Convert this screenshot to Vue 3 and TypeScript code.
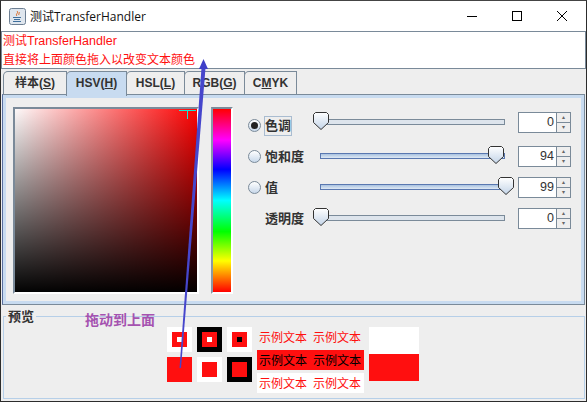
<template>
  <div class="window">
    <div class="titlebar">
      <svg class="app-icon" width="17" height="17" viewBox="0 0 17 17">
        <rect x="0.5" y="0.5" width="16" height="16" rx="2" fill="#dfe6ee" stroke="#6d7f93" />
        <path d="M8 3c2 2-2 3 0 5M10 4c1 1-1 2 0 3" fill="none" stroke="#d9651c" stroke-width="1" />
        <path d="M4 9.5h8M5 11.5h6M4 13.5h8" stroke="#3f6f9c" stroke-width="1" />
      </svg>
      <span class="title">测试TransferHandler</span>
      <div class="win-buttons">
        <svg width="12" height="12" viewBox="0 0 12 12"><path d="M1 6.5h10" stroke="#000" /></svg>
        <svg width="12" height="12" viewBox="0 0 12 12"><rect x="1.5" y="1.5" width="9" height="9" fill="none" stroke="#000" /></svg>
        <svg width="12" height="12" viewBox="0 0 12 12"><path d="M1 1l10 10M11 1L1 11" stroke="#000" /></svg>
      </div>
    </div>

    <div class="text-pane">
      <div>测试<span class="latin">TransferHandler</span></div>
      <div>直接将上面颜色拖入以改变文本颜色</div>
    </div>

    <div class="tabs">
      <div
        v-for="tab in tabs"
        :key="tab.label"
        class="tab"
        :class="{ active: tab.label === 'HSV' }"
        :style="{ width: tab.width + 'px' }"
      >
        {{ tab.label }}<template v-if="tab.key">(<u>{{ tab.key }}</u>)</template><template v-else>C<u>M</u>YK</template>
      </div>
    </div>

    <div class="pane">
      <div class="picker">
        <div class="sv-box">
          <svg class="sv-cursor" width="17" height="9" viewBox="0 0 17 9">
            <path d="M0 .5h17M8.5 0v9" stroke="#19e6d2" fill="none" />
          </svg>
        </div>
        <div class="hue-strip"></div>
      </div>
      <div class="controls">
        <div v-for="row in rows" :key="row.label" class="row" :class="{ first: row.checked }">
          <span class="radio" :class="{ checked: row.checked, hidden: row.noRadio }"></span>
          <span class="label" :class="{ focused: row.checked }">{{ row.label }}</span>
          <div class="slider">
            <div class="track" :class="{ filled: row.filled }"></div>
            <svg class="thumb" :style="{ left: row.thumb + 'px' }" width="16" height="18" viewBox="0 0 16 18">
              <defs>
                <linearGradient :id="'th' + row.thumb" x1="0" y1="0" x2="0" y2="1">
                  <stop offset="0" stop-color="#ffffff" />
                  <stop offset="1" stop-color="#c3d4e8" />
                </linearGradient>
              </defs>
              <path d="M2.5 .5h11l2 2v8l-7.5 7-7.5-7v-8z" :fill="'url(#th' + row.thumb + ')'" stroke="#333" />
            </svg>
          </div>
          <div class="spinner">
            <div class="spin-value">{{ row.value }}</div>
            <div class="spin-buttons">
              <div class="spin-btn">▴</div>
              <div class="spin-btn">▾</div>
            </div>
          </div>
        </div>
      </div>
    </div>

    <fieldset class="preview">
      <legend>预览</legend>
      <div class="preview-body">
        <div class="swatches">
          <div v-for="(s, i) in swatches" :key="i" class="swatch" :style="{ background: s[0] }">
            <div class="swatch-mid">
              <div class="swatch-dot" :style="{ background: s[1] }"></div>
            </div>
          </div>
        </div>
        <div class="samples">
          <div class="sample plain"><span>示例文本</span><span>示例文本</span></div>
          <div class="sample inverted"><span>示例文本</span><span>示例文本</span></div>
          <div class="sample boxed"><span>示例文本</span><span>示例文本</span></div>
        </div>
        <div class="half-block">
          <div class="half-white"></div>
          <div class="half-red"></div>
        </div>
      </div>
    </fieldset>

    <span class="drag-note">拖动到上面</span>
    <svg class="arrow" width="587" height="402" viewBox="0 0 587 402">
      <polygon points="179.5,368 181,368 205.5,68 201.5,68" fill="#4646cc" />
      <polygon points="203.5,59 208,69 199,69" fill="#3f3fc8" />
    </svg>
  </div>
</template>

<script setup lang="ts">
interface Row {
  label: string
  value: number
  thumb: number
  checked?: boolean
  noRadio?: boolean
  filled?: boolean
}

const tabs = [
  { label: '样本', key: 'S', width: 64 },
  { label: 'HSV', key: 'H', width: 61 },
  { label: 'HSL', key: 'L', width: 59 },
  { label: 'RGB', key: 'G', width: 61 },
  { label: '', key: '', width: 53 }
]

const rows: Row[] = [
  { label: '色调', value: 0, thumb: 0, checked: true },
  { label: '饱和度', value: 94, thumb: 175, filled: true },
  { label: '值', value: 99, thumb: 185, filled: true },
  { label: '透明度', value: 0, thumb: 0, noRadio: true }
]

const red = '#ff0f0f'
// outer, dot
const swatches = [
  ['#fff', '#fff'],
  ['#000', '#fff'],
  ['#fff', '#000'],
  [red, red],
  ['#fff', red],
  ['#000', red]
]
</script>

<style>
body {
  margin: 0;
  background: #eeeeee;
}
</style>

<style scoped>
.window {
  position: relative;
  width: 587px;
  height: 402px;
  box-sizing: border-box;
  border: 1px solid #2c2c2c;
  border-top-color: #444;
  background: #eeeeee;
  display: flex;
  flex-direction: column;
  overflow: hidden;
  font-family: "Liberation Sans", "Noto Sans CJK SC", sans-serif;
  font-size: 12px;
  color: #333;
}

.titlebar {
  height: 30px;
  flex: none;
  background: #fff;
  display: flex;
  align-items: center;
  padding-left: 8px;
}
.app-icon {
  margin-right: 4px;
}
.title {
  font-family: "Open Sans", "Noto Sans CJK SC", sans-serif;
  font-size: 12px;
  color: #111;
}
.win-buttons {
  margin-left: auto;
  display: flex;
  gap: 33px;
  padding-right: 18px;
}
.win-buttons svg {
  display: block;
}

.text-pane {
  height: 38px;
  flex: none;
  box-sizing: border-box;
  border: 1px solid #7a8a99;
  background: #fff;
  color: #ff0f0f;
  font-size: 12px;
  line-height: 19px;
  padding: 0 0 0 1px;
}
.latin {
  font-size: 12.5px;
}

.tabs {
  height: 23px;
  flex: none;
  margin-top: 2px;
  padding-left: 2px;
  display: flex;
}
.tab {
  box-sizing: border-box;
  height: 23px;
  border: 1px solid #7a8a99;
  border-bottom: none;
  border-radius: 5px 0 0 0;
  margin-right: -1px;
  text-align: center;
  font-weight: 700;
  line-height: 22px;
  color: #333;
  background: #eeeeee;
}
.tab.active {
  position: relative;
  z-index: 1;
  height: 25px;
  background: #c8dbf0;
}

.pane {
  width: 583px;
  height: 211px;
  flex: none;
  margin-left: 1px;
  box-sizing: border-box;
  border: 1px solid #7a8a99;
  border-left-color: #5a70a0;
  box-shadow: inset 0 0 0 3px #c8dbf0;
  padding: 12px 0 0 10px;
  display: flex;
}
.picker {
  display: flex;
  gap: 12px;
}
.sv-box {
  position: relative;
  width: 186px;
  height: 187px;
  box-sizing: border-box;
  border: 2px solid #7a8a99;
  border-right-color: #fff;
  border-bottom-color: #fff;
  background: linear-gradient(to bottom, rgba(0, 0, 0, 0), #000), linear-gradient(to right, #fff, #ff0000);
  background-origin: border-box;
}
.sv-cursor {
  position: absolute;
  left: 164px;
  top: 1px;
}
.hue-strip {
  width: 22px;
  height: 187px;
  box-sizing: border-box;
  border: 2px solid #7a8a99;
  border-left-color: #8a99a8;
  border-right-color: #fff;
  border-bottom-color: #fff;
  background: linear-gradient(to bottom, #f00, #f0f 17%, #00f 33%, #0ff 50%, #0f0 67%, #ff0 83%, #f00);
}

.controls {
  margin-left: 15px;
  padding-top: 8px;
  display: flex;
  flex-direction: column;
  gap: 10px;
}
.row {
  display: flex;
  align-items: center;
  height: 21px;
}
/* java 里第一行的滑块和微调框比单选框高一点 */
.row.first .slider,
.row.first .spinner {
  margin-bottom: 6px;
}
.radio {
  flex: none;
  box-sizing: border-box;
  width: 13px;
  height: 13px;
  margin-right: 3px;
  border: 1px solid #7a8a99;
  border-radius: 50%;
  background: linear-gradient(#fff, #c8d8ea);
  position: relative;
}
.radio.checked::after {
  content: "";
  position: absolute;
  left: 2px;
  top: 2px;
  width: 7px;
  height: 7px;
  border-radius: 50%;
  background: #222;
}
.radio.hidden {
  visibility: hidden;
}
.label {
  flex: none;
  width: 49px;
  box-sizing: border-box;
  padding-left: 1px;
  font-weight: 700;
  font-size: 13px;
  line-height: 20px;
}
.label.focused {
  position: relative;
}
.label.focused::before {
  content: "";
  position: absolute;
  left: 0;
  top: 0;
  width: 28px;
  height: 20px;
  border: 1px solid #a9bcd0;
  box-sizing: border-box;
}
.slider {
  position: relative;
  flex: none;
  width: 205px;
  height: 21px;
}
.track {
  position: absolute;
  left: 7px;
  top: 7px;
  width: 185px;
  height: 6px;
  box-sizing: border-box;
  border: 1px solid #7a8a99;
  background: #dde4ec;
}
.track.filled {
  border-color: #5a78b0;
  background: linear-gradient(#a9c2e0, #dfe9f4);
}
.thumb {
  position: absolute;
  top: 0;
}
.spinner {
  flex: none;
  display: flex;
  width: 53px;
  height: 21px;
}
.spin-value {
  width: 38px;
  box-sizing: border-box;
  background: #fff;
  border-top: 1px solid #7a8a99;
  border-left: 1px solid #7a8a99;
  border-bottom: 1px solid #7a8a99;
  text-align: right;
  padding-right: 2px;
  font-size: 12.5px;
  line-height: 19px;
}
.spin-buttons {
  width: 15px;
  display: flex;
  flex-direction: column;
}
.spin-btn {
  flex: 1;
  box-sizing: border-box;
  border: 1px solid #7a8a99;
  background: #eeeeee;
  color: #666;
  font-size: 6px;
  line-height: 9px;
  text-align: center;
}
.spin-btn + .spin-btn {
  border-top: none;
}

.preview {
  flex: none;
  width: 582px;
  height: 89px;
  box-sizing: border-box;
  margin: 5px 0 0 2px;
  padding: 0;
  min-width: 0;
  border: 1px solid #b6cfe8;
}
.preview legend {
  margin-left: 2px;
  padding: 0 2px;
  font-weight: 700;
  font-size: 13px;
  line-height: 13px;
}
.preview-body {
  margin: 4px 0 0 163px;
  display: flex;
  gap: 5px;
}
.swatches {
  display: grid;
  grid-template-columns: repeat(3, 25px);
  grid-auto-rows: 25px;
  gap: 5px;
}
.swatch {
  padding: 5px;
  box-sizing: border-box;
}
.swatch-mid {
  width: 15px;
  height: 15px;
  background: #ff0f0f;
  padding: 5px;
  box-sizing: border-box;
}
.swatch-dot {
  width: 5px;
  height: 5px;
}
.samples {
  width: 107px;
  font-size: 12px;
  display: flex;
  flex-direction: column;
  gap: 3px;
}
.sample {
  height: 20px;
  line-height: 23px;
  display: flex;
  justify-content: center;
  gap: 6px;
  padding-right: 1px;
  color: #ff0f0f;
}
.sample.inverted {
  background: #ff0f0f;
  color: #000;
}
.sample.boxed {
  background: #fff;
}
.half-block {
  width: 50px;
  height: 54px;
}
.half-white {
  height: 27px;
  background: #fff;
}
.half-red {
  height: 27px;
  background: #ff0f0f;
}

.drag-note {
  position: absolute;
  left: 84px;
  top: 308px;
  font-size: 14px;
  font-weight: 700;
  color: #a552b0;
}
.arrow {
  position: absolute;
  left: -1px;
  top: -1px;
  pointer-events: none;
}
</style>
